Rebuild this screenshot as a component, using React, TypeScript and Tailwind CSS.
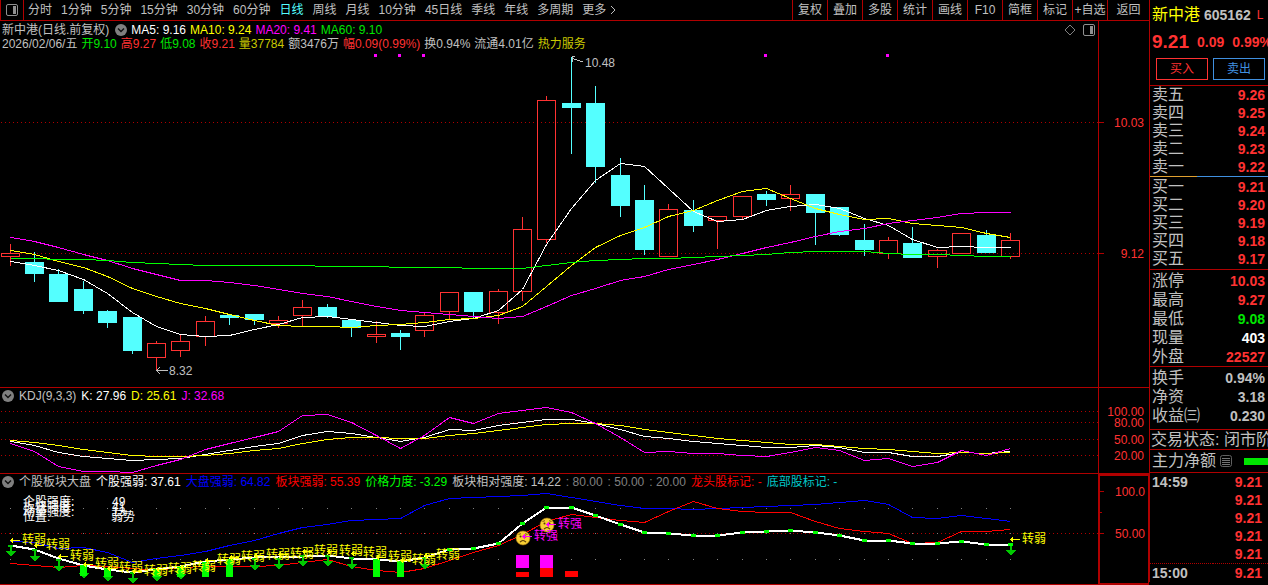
import { useState } from "react";

const periods = [
  "分时", "1分钟", "5分钟", "15分钟", "30分钟", "60分钟", "日线", "周线",
  "月线", "10分钟", "45日线", "季线", "年线", "多周期",
];

const tools = ["复权", "叠加", "多股", "统计", "画线", "F10", "简框", "标记", "+自选"];

const maLegend = [
  { text: "MA5: 9.16", color: "text-white" },
  { text: "MA10: 9.24", color: "text-[#ffff00]" },
  { text: "MA20: 9.41", color: "text-[#ff00ff]" },
  { text: "MA60: 9.10", color: "text-[#00e600]" },
];

const dayInfo = [
  { text: "2026/02/06/五", color: "text-[#c0c0c0]" },
  { text: "开9.10", color: "text-[#00e600]" },
  { text: "高9.27", color: "text-[#ff3232]" },
  { text: "低9.08", color: "text-[#00e600]" },
  { text: "收9.21", color: "text-[#ff3232]" },
  { text: "量37784", color: "text-[#c8c800]" },
  { text: "额3476万", color: "text-[#c0c0c0]" },
  { text: "幅0.09(0.99%)", color: "text-[#ff3232]" },
  { text: "换0.94%", color: "text-[#c0c0c0]" },
  { text: "流通4.01亿", color: "text-[#c0c0c0]" },
  { text: "热力服务", color: "text-[#c8c800]" },
];

const kdjLegend = [
  { text: "KDJ(9,3,3)", color: "text-[#c0c0c0]" },
  { text: "K: 27.96", color: "text-white" },
  { text: "D: 25.61", color: "text-[#ffff00]" },
  { text: "J: 32.68", color: "text-[#ff00ff]" },
];

const strengthLegend = [
  { text: "个股板块大盘", color: "text-[#c0c0c0]" },
  { text: "个股强弱: 37.61", color: "text-white" },
  { text: "大盘强弱: 64.82", color: "text-[#0000ff]" },
  { text: "板块强弱: 55.39", color: "text-[#ff0000]" },
  { text: "价格力度: -3.29", color: "text-[#00ff00]" },
  { text: "板块相对强度: 14.22", color: "text-[#c0c0c0]" },
  { text: ": 80.00", color: "text-[#808080]" },
  { text: ": 50.00", color: "text-[#808080]" },
  { text: ": 20.00", color: "text-[#808080]" },
  { text: "龙头股标记: -", color: "text-[#ff0000]" },
  { text: "底部股标记: -", color: "text-[#00c8c8]" },
];

// [up, high, body top, body bottom, low]
const candles: [number, number, number, number, number][] = [
  [1, 244, 253, 257, 266], [0, 252, 262, 274, 282], [0, 269, 274, 302, 302],
  [0, 281, 289, 311, 314], [0, 310, 311, 323, 328], [0, 317, 317, 351, 354],
  [1, 341, 343, 358, 370], [1, 335, 341, 351, 357], [1, 316, 321, 337, 346],
  [0, 315, 315, 318, 325], [0, 314, 314, 320, 325], [1, 316, 320, 324, 328],
  [1, 300, 307, 316, 327], [0, 304, 307, 317, 318], [0, 319, 320, 328, 337],
  [1, 321, 334, 337, 343], [0, 330, 333, 337, 350], [1, 312, 315, 331, 337],
  [1, 292, 292, 312, 319], [0, 292, 292, 312, 318], [1, 289, 291, 313, 324],
  [1, 217, 229, 292, 301], [1, 96, 100, 240, 243], [0, 57, 103, 108, 154],
  [0, 86, 103, 167, 183], [0, 158, 175, 206, 217], [0, 185, 200, 250, 255],
  [1, 204, 209, 257, 257], [0, 200, 210, 226, 232], [1, 216, 216, 221, 249],
  [1, 196, 196, 217, 220], [0, 191, 194, 200, 206], [1, 185, 194, 199, 211],
  [0, 194, 194, 213, 245], [0, 207, 207, 235, 236], [0, 224, 240, 250, 256],
  [1, 237, 240, 254, 259], [0, 227, 243, 258, 258], [1, 249, 250, 257, 268],
  [1, 233, 233, 254, 254], [0, 230, 235, 253, 253], [1, 233, 240, 257, 259],
];

const ma5 = [261, 265, 270, 279, 293, 312, 326, 334, 336, 335, 329, 324, 317, 316, 319, 322, 325, 326, 321, 318, 310, 289, 244, 208, 180, 163, 166, 188, 211, 221, 219, 210, 206, 204, 208, 218, 225, 239, 247, 246, 247, 247];
const ma10 = [250, 254, 261, 267, 276, 288, 296, 303, 308, 314, 320, 325, 326, 326, 327, 325, 324, 322, 319, 318, 315, 306, 286, 265, 247, 235, 227, 216, 210, 200, 191, 188, 198, 208, 214, 219, 218, 223, 225, 227, 233, 237];
const ma20 = [237, 241, 247, 254, 260, 268, 274, 280, 280, 282, 285, 289, 293, 296, 301, 306, 310, 312, 314, 316, 318, 316, 306, 295, 288, 280, 276, 269, 264, 259, 253, 247, 242, 236, 231, 228, 223, 220, 217, 213, 212, 212];
const ma60 = [258, 258, 259, 259, 260, 262, 263, 264, 265, 265, 265, 265, 265, 266, 266, 266, 267, 267, 267, 268, 268, 268, 265, 262, 260, 259, 258, 258, 257, 256, 255, 254, 252, 251, 251, 251, 253, 254, 254, 255, 256, 256];

const kLine = [441, 445, 452, 456, 458, 460, 459, 458, 454, 450, 446, 443, 435, 431, 433, 437, 441, 437, 429, 430, 425, 422, 419, 419, 423, 429, 436, 438, 441, 443, 445, 447, 447, 445, 447, 452, 452, 456, 456, 452, 453, 451];
const dLine = [440, 442, 445, 449, 452, 455, 456, 456, 455, 453, 450, 448, 443, 439, 437, 437, 438, 438, 435, 433, 430, 427, 424, 423, 423, 425, 429, 432, 435, 438, 440, 442, 444, 444, 446, 448, 449, 451, 453, 452, 453, 452];
const jLine = [443, 451, 466, 471, 471, 472, 465, 459, 449, 443, 437, 431, 415, 414, 422, 435, 448, 435, 417, 423, 413, 410, 407, 412, 423, 437, 452, 451, 453, 453, 455, 456, 452, 447, 450, 460, 458, 466, 462, 450, 455, 448];

const stockLine = [545, 549, 558, 565, 569, 572, 569, 566, 561, 559, 557, 556, 556, 555, 558, 559, 561, 557, 549, 548, 543, 523, 507, 507, 515, 524, 532, 533, 535, 535, 532, 531, 530, 532, 535, 540, 540, 543, 543, 541, 544, 544];
const marketLine = [541, 542, 548, 547, 552, 562, 558, 555, 551, 545, 540, 533, 527, 524, 520, 519, 518, 505, 498, 497, 496, 495, 493, 497, 501, 505, 508, 508, 509, 508, 507, 506, 505, 504, 502, 500, 504, 517, 518, 515, 518, 521];
const sectorLine = [563, 565, 567, 565, 566, 568, 570, 567, 566, 566, 566, 565, 562, 559, 566, 570, 572, 568, 560, 552, 545, 534, 521, 514, 517, 520, 522, 511, 501, 508, 511, 512, 512, 521, 528, 531, 533, 543, 542, 531, 531, 529];

// [index, label baseline]
const weakLabels = [
  [0, 544], [1, 549], [2, 560], [3, 568], [4, 572], [5, 575], [6, 573], [7, 571], [8, 564],
  [9, 561], [10, 559], [11, 558], [12, 555], [13, 555], [14, 557], [15, 561], [16, 564], [17, 559], [41, 543],
];

// [index, top, bottom of the head]
const arrows = [
  [0, 545, 557], [1, 549, 562], [2, 559, 572], [3, 566, 579], [4, 569, 582], [5, 572, 584], [6, 569, 582], [7, 567, 580],
  [10, 558, 571], [11, 558, 570], [12, 555, 567], [13, 555, 567], [14, 557, 570], [17, 557, 570], [41, 544, 556],
];

// [index, top, bottom]
const greenBars = [[3, 565, 576], [4, 568, 577], [6, 569, 577], [7, 566, 577], [8, 562, 577], [9, 559, 577], [15, 559, 577], [16, 561, 577]];

const sells = [["卖五", "9.26"], ["卖四", "9.25"], ["卖三", "9.24"], ["卖二", "9.23"], ["卖一", "9.22"]];
const buys = [["买一", "9.21"], ["买二", "9.20"], ["买三", "9.19"], ["买四", "9.18"], ["买五", "9.17"]];

const stats = [
  ["涨停", "10.03", "text-[#ff3232]"],
  ["最高", "9.27", "text-[#ff3232]"],
  ["最低", "9.08", "text-[#00e600]"],
  ["现量", "403", "text-white"],
  ["外盘", "22527", "text-[#ff3232]"],
];

const ratios = [
  ["换手", "0.94%", "text-[#c0c0c0]"],
  ["净资", "3.18", "text-[#c0c0c0]"],
  ["收益㈢", "0.230", "text-[#c0c0c0]"],
];

const barX = (i: number) => Math.floor(10.1 + 24.4 * i);

const toPoints = (values: number[]) => values.map((y, i) => `${barX(i) + 0.5},${y + 0.5}`).join(" ");

const Line = ({ values, color, width = 1 }: { values: number[]; color: string; width?: number }) => (
  <polyline points={toPoints(values)} fill="none" stroke={color} strokeWidth={width} />
);

const GridLine = ({ y }: { y: number }) => (
  <line x1="1" x2="100%" y1={y + 0.5} y2={y + 0.5} stroke="#b00000" strokeDasharray="1 3" />
);

const ChevronBadge = () => (
  <svg width="12" height="12" viewBox="0 0 12 12" className="shrink-0">
    <circle cx="6" cy="6" r="6" fill="#808080" />
    <path d="M3 4.5 L6 7.5 L9 4.5" fill="none" stroke="#111" strokeWidth="1.4" />
  </svg>
);

const PanelIcon = () => (
  <svg width="12" height="12" viewBox="0 0 12 12">
    <rect x="0.5" y="0.5" width="11" height="11" rx="1.5" fill="none" stroke="#909090" />
    <rect x="7" y="2" width="3" height="8" fill="#909090" />
  </svg>
);

const Legend = ({ items }: { items: { text: string; color: string }[] }) => (
  <>
    {items.map((item) => (
      <span key={item.text} className={item.color}>{item.text}</span>
    ))}
  </>
);

const SadFace = ({ x, y }: { x: number; y: number }) => (
  <g transform={`translate(${x} ${y})`} shapeRendering="auto">
    <circle r="7" fill="#f8cf35" stroke="#a87a10" strokeWidth="0.6" />
    <circle cx="-2.5" cy="-1.5" r="1" fill="#5a3a00" />
    <circle cx="2.5" cy="-1.5" r="1" fill="#5a3a00" />
    <path d="M-4.5 -3.5 L-2 -4.3 M4.5 -3.5 L2 -4.3" stroke="#5a3a00" strokeWidth="0.8" />
    <path d="M-3 4.2 Q0 0.8 3 4.2" fill="none" stroke="#5a3a00" strokeWidth="1.1" />
  </g>
);

const SignalLabel = ({ x, y, text, color }: { x: number; y: number; text: string; color: string }) => (
  <g>
    <path d={`M${x + 1} ${y - 3.5} h9 M${x + 3} ${y - 5.5} l-2 2 l2 2`} stroke={color} fill="none" />
    <text x={x + 12} y={y} fill={color}>{text}</text>
  </g>
);

const CandleChart = () => (
  <svg className="block h-[335px] w-full" shapeRendering="crispEdges" fontSize="12">
    <g transform="translate(0 -52)">
      <GridLine y={122} />
      <GridLine y={253} />
      {[374, 398, 422, 764, 886].map((x) => (
        <rect key={x} x={x} y="54" width="3" height="3" fill="#ff00ff" />
      ))}
      {candles.map(([up, high, top, bottom, low], i) => {
        const x = barX(i);
        return up ? (
          <g key={i} stroke="#ff3232" fill="none">
            <path d={`M${x + 0.5} ${high} V${top} M${x + 0.5} ${bottom} V${low}`} />
            <rect x={x - 8.5} y={top + 0.5} width="18" height={bottom - top - 1} />
          </g>
        ) : (
          <g key={i} fill="#54ffff">
            <rect x={x} y={high} width="1" height={low - high} />
            <rect x={x - 9} y={top} width="19" height={bottom - top} />
          </g>
        );
      })}
      <Line values={ma5} color="#ffffff" />
      <Line values={ma10} color="#ffff00" />
      <Line values={ma20} color="#ff00ff" />
      <Line values={ma60} color="#00ff00" />
      <g stroke="#c0c0c0" fill="none">
        <path d="M572 58.5 L583 62 M575 56.5 H572 V62" />
        <path d="M157 370.5 H168 M160 367 L157 370.5 L160 374" />
      </g>
      <text x="585" y="67" fill="#c0c0c0">10.48</text>
      <text x="169" y="375" fill="#c0c0c0">8.32</text>
    </g>
  </svg>
);

const KdjChart = () => (
  <svg className="block h-[69px] w-full" shapeRendering="crispEdges">
    <g transform="translate(0 -404)">
      <GridLine y={411} />
      <GridLine y={422} />
      <GridLine y={439} />
      <GridLine y={455} />
      <Line values={kLine} color="#ffffff" />
      <Line values={dLine} color="#ffff00" />
      <Line values={jLine} color="#ff00ff" />
    </g>
  </svg>
);

const StrengthChart = () => (
  <svg className="block h-[94px] w-full" shapeRendering="crispEdges" fontSize="12">
    <g transform="translate(0 -490)">
      <GridLine y={533} />
      {candles.map((_, i) => (
        <g key={i} fill="#808080">
          <rect x={barX(i)} y="508" width="1" height="1" />
          <rect x={barX(i)} y="533" width="1" height="1" />
          <rect x={barX(i)} y="559" width="1" height="1" />
        </g>
      ))}
      <Line values={marketLine} color="#0000ff" />
      <Line values={sectorLine} color="#ff0000" />
      <Line values={stockLine} color="#ffffff" width={2} />

      {arrows.map(([i, top, tip]) => (
        <g key={i} fill="#00c800">
          <rect x={barX(i) - 2} y={top} width="5" height="2" />
          <rect x={barX(i)} y={top} width="2" height={tip - top - 5} />
          <path d={`M${barX(i) - 4} ${tip - 6} h10 l-5 6 z`} />
        </g>
      ))}
      {greenBars.map(([i, top, bottom]) => (
        <rect key={i} x={barX(i) - 3} y={top} width="7" height={bottom - top} fill="#00ff00" />
      ))}
      {stockLine.map((y, i) =>
        i > 17 ? <rect key={i} x={barX(i) - 2} y={y - 1} width="5" height="3" fill="#00ff00" /> : null
      )}
      {weakLabels.map(([i, y]) => (
        <SignalLabel key={i} x={barX(i)} y={y} text="转弱" color="#ffff00" />
      ))}

      <rect x="516" y="555" width="13" height="13" fill="#ff00ff" />
      <rect x="516" y="572" width="13" height="5" fill="#ff0000" />
      <rect x="540" y="555" width="13" height="13" fill="#ff00ff" />
      <rect x="540" y="568" width="13" height="9" fill="#ff0000" />
      <rect x="565" y="571" width="13" height="6" fill="#ff0000" />
      <SadFace x={523} y={538} />
      <SadFace x={547} y={525} />
      <SignalLabel x={522} y={540} text="转强" color="#ff00ff" />
      <SignalLabel x={546} y={528} text="转强" color="#ff00ff" />

      <g fill="#ffffff">
        <text x="23" y="506">个股强度:</text>
        <text x="23" y="511">板块强度:</text>
        <text x="23" y="516">动量强度:</text>
        <text x="23" y="521">位置:</text>
        <text x="112" y="506">49</text>
        <text x="112" y="511">41</text>
        <text x="112" y="516">13</text>
        <text x="111" y="521">弱势</text>
      </g>
    </g>
  </svg>
);

const AxisLabel = ({ y, text }: { y: number; text: string }) => (
  <text x="45" y={y} fill="#ff3232" textAnchor="end">{text}</text>
);

const QuoteTable = ({ rows, label }: { rows: string[][]; label: string }) => (
  <table className="w-full" aria-label={label}>
    <tbody>
      {rows.map(([name, value, color]) => (
        <tr key={name} className={color ? "h-[19px] leading-[19px]" : "h-[18px] leading-[18px]"}>
          <th className="p-0 pl-[2px] text-left text-base leading-[18px] font-normal text-[#c0c0c0]">{name}</th>
          <td className={`p-0 pr-[3px] text-right text-sm leading-[18px] font-bold ${color || "text-[#ff3232]"}`}>{value}</td>
        </tr>
      ))}
    </tbody>
  </table>
);

const App = () => {
  const [period, setPeriod] = useState("日线");

  return (
    <div className="flex min-h-screen w-full items-start overflow-hidden bg-black font-['Liberation_Sans','Noto_Sans_CJK_SC',sans-serif] text-xs leading-[14px] whitespace-nowrap text-[#c0c0c0]">
      <main className="min-w-0 flex-1">
        {/* Toolbar */}
        <nav className="flex h-[21px] items-stretch border-b border-[#b00000]">
          <button aria-label="侧栏" className="flex w-6 shrink-0 items-center justify-center border-x border-[#b00000]">
            <PanelIcon />
          </button>
          <div className="flex min-w-0 flex-1 items-center gap-[9px] overflow-hidden pl-1">
            {periods.map((item) => (
              <button
                key={item}
                onClick={() => setPeriod(item)}
                className={item === period ? "text-[#54ffff]" : "text-[#c0c0c0]"}
              >
                {item}
              </button>
            ))}
            <button className="flex items-center gap-1">
              更多
              <svg width="6" height="10" viewBox="0 0 6 10">
                <path d="M1 1 L5 5 L1 9" fill="none" stroke="#c0c0c0" />
              </svg>
            </button>
          </div>
          {tools.map((item) => (
            <button key={item} className="w-[35px] shrink-0 border-l border-[#b00000]">{item}</button>
          ))}
          <button className="w-[42px] shrink-0 border-l border-[#b00000]">返回</button>
        </nav>

        {/* Candles */}
        <section className="flex border-b border-[#b00000]">
          <div className="min-w-0 flex-1">
            <div className="flex h-[31px] justify-between pt-[2px] pl-[2px]">
              <div>
                <div className="flex items-center gap-1">
                  <span className="pr-[2px]">新中港(日线.前复权)</span>
                  <ChevronBadge />
                  <Legend items={maLegend} />
                </div>
                <div className="flex gap-1">
                  <Legend items={dayInfo} />
                </div>
              </div>
              <div className="flex h-[14px] items-center gap-[7px] pr-[3px]">
                <svg width="12" height="12" viewBox="0 0 12 12">
                  <path d="M6 1 L11 6 L6 11 L1 6 Z" fill="none" stroke="#808080" />
                </svg>
                <PanelIcon />
              </div>
            </div>
            <CandleChart />
          </div>
          <svg className="h-[366px] w-[51px] shrink-0 border-l border-[#b00000]" fontSize="12">
            <path d="M0 101.5 h5 M0 232.5 h5" stroke="#b00000" />
            <AxisLabel y={106} text="10.03" />
            <AxisLabel y={237} text="9.12" />
          </svg>
        </section>

        {/* KDJ */}
        <section className="flex border-b border-[#b00000]">
          <div className="min-w-0 flex-1">
            <div className="flex h-4 items-center gap-[5px] pl-[2px]">
              <ChevronBadge />
              <Legend items={kdjLegend} />
            </div>
            <KdjChart />
          </div>
          <svg className="h-[85px] w-[51px] shrink-0 border-l border-[#b00000]" fontSize="12">
            <AxisLabel y={28} text="100.00" />
            <AxisLabel y={39} text="80.00" />
            <AxisLabel y={56} text="50.00" />
            <AxisLabel y={72} text="20.00" />
          </svg>
        </section>

        {/* Stock / sector / market strength */}
        <section className="flex border-b border-[#b00000]">
          <div className="min-w-0 flex-1">
            <div className="flex h-4 items-center gap-[5px] overflow-hidden pl-[2px]">
              <ChevronBadge />
              <Legend items={strengthLegend} />
            </div>
            <StrengthChart />
          </div>
          <svg className="h-[110px] w-[51px] shrink-0 border-2 border-r-1 border-b-1 border-[#b00000]" fontSize="12">
            <path d="M0 15.5 h4 M0 36.5 h2 M0 57.5 h4" stroke="#b00000" />
            <AxisLabel y={20} text="100.0" />
            <AxisLabel y={62} text="50.00" />
          </svg>
        </section>
      </main>

      {/* Quote column */}
      <aside className="w-[119px] shrink-0 overflow-hidden border-l border-[#b00000]">
        <div className="border-b border-[#b00000]">
          <div className="flex h-[30px] items-center gap-1 pl-[2px]">
            <span className="text-base text-[#ffff00]">新中港</span>
            <span className="text-sm font-bold">605162</span>
            <span className="pl-[2px] text-[#ff3232]">L</span>
          </div>
          <div className="flex h-[24px] items-center gap-2 pl-[2px] text-sm font-bold text-[#ff3232]">
            <span className="text-[19px]">9.21</span>
            <span>0.09</span>
            <span>0.99%</span>
          </div>
          <div className="flex gap-[5px] px-[6px] pt-1 pb-[5px]">
            <button className="h-[22px] w-[52px] shrink-0 border border-[#ff3232] text-[#ff3232]">买入</button>
            <button className="h-[22px] w-[52px] shrink-0 border border-[#4090e0] text-[#4090e0]">卖出</button>
          </div>
        </div>
        <QuoteTable rows={sells} label="卖盘" />
        <div className="flex h-px">
          <div className="w-[47px] bg-[#e0a030]" />
          <div className="flex-1 bg-[#4090e0]" />
        </div>
        <div className="border-b border-[#b00000] py-px">
          <QuoteTable rows={buys} label="买盘" />
        </div>
        <div className="border-b border-[#b00000] pt-px">
          <QuoteTable rows={stats} label="行情" />
        </div>
        <div className="border-b border-[#b00000] pt-px pb-1">
          <QuoteTable rows={ratios} label="指标" />
        </div>
        <div className="border-b border-[#b00000] pl-px text-base leading-[19px]">交易状态: 闭市阶段</div>
        <div className="flex h-[23px] items-center border-b border-[#b00000] pl-[2px]">
          <span className="text-base">主力净额</span>
          <svg width="12" height="12" viewBox="0 0 12 12" className="mx-1 shrink-0">
            <rect x="0.5" y="0.5" width="11" height="11" rx="2" fill="none" stroke="#606060" />
            <path d="M2 3.5 h8 M2 5.5 h8 M2 7.5 h8 M2 9.5 h8" stroke="#909090" strokeWidth="0.8" />
          </svg>
          <div className="ml-2 h-[7px] flex-1 bg-[#00e600]" />
        </div>
        <table className="w-full text-sm leading-[18px] font-bold" aria-label="分笔成交">
          <tbody>
            {["14:59", "", "", "", "", "15:00"].map((time, i) => (
              <tr key={i} className={i === 5 ? "border-t border-dotted border-[#b00000]" : ""}>
                <td className="p-0 pl-[2px]">{time}</td>
                <td className="p-0 pr-[6px] text-right text-[#ff3232]">9.21</td>
              </tr>
            ))}
          </tbody>
        </table>
      </aside>
    </div>
  );
};

export default App;
